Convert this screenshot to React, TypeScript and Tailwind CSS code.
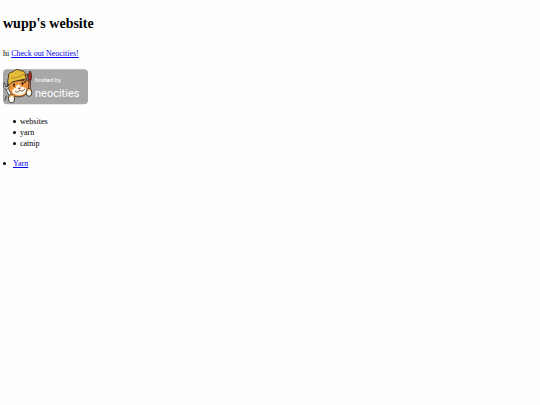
const topics = ["websites", "yarn", "catnip"];

const linkStyle = "text-[#0000ee] underline";

function Bullet() {
  return <span aria-hidden="true" className="size-[3px] rounded-full bg-black" />;
}

function NeocitiesBadge() {
  return (
    <svg
      className="block h-9 w-[85px]"
      viewBox="0 0 85 36"
      role="img"
      aria-label="Hosted by Neocities"
    >
      <rect y="0.3" width="85" height="35" rx="4" fill="#a8a8a8" />

      {/* cat head */}
      <g stroke="#2b2118" strokeWidth="0.8" strokeLinejoin="round">
        <path d="M6 12C3 17 4 22 8 25C12 29 20 29 24 24C27 20 27 15 25 11Z" fill="#ec9440" />
        <path d="M22 14L25 5L19 8Z" fill="#f39a3c" />
        <path
          d="M5 14C4 11 6 9 5.5 7C5 4 8 3 10 3C12 0 16 0 18 2C21 1 23 4 22 7C24 8 24 10 22 10L9 13C7 16 4 17 5 14Z"
          fill="#e5bd38"
        />
        <path d="M8 9C12 9 17 8 21 5" fill="none" stroke="#a77b16" strokeWidth="0.8" />
      </g>
      <path d="M13 17L16 15L18 18C23 18 25 20 22 24C19 27 12 27 9 23C9 20 11 19 13 19Z" fill="#fff4e3" />
      <ellipse cx="11" cy="16" rx="0.9" ry="1.7" fill="#241c17" />
      <ellipse cx="19.5" cy="14.5" rx="0.9" ry="1.7" fill="#241c17" />
      <path d="M14.5 19L18 18.5L16.5 20.5Z" fill="#9b4238" />
      <path d="M12 22C14 24 16 23 17 21C18.5 23 21 22 22 19.5" fill="none" stroke="#33251d" strokeWidth="0.7" />

      {/* wrench and left paw */}
      <g strokeLinecap="round">
        <path d="M3.5 19L9 29" stroke="#292929" strokeWidth="3.2" />
        <path d="M3.5 19L9 29" stroke="#e2e7e8" strokeWidth="2" />
        <path
          d="M1 14L0.7 18C2 21 5 21 6 18L5 15L4.2 18L2.5 18L1.7 14Z"
          fill="#e1e6e7"
          stroke="#292929"
          strokeWidth="0.7"
        />
        <path d="M3.5 27L2 31" stroke="#555" strokeWidth="1.2" />
        <ellipse cx="8.5" cy="29.5" rx="3" ry="4.2" fill="#fffaf0" stroke="#2b2118" strokeWidth="0.9" />
        <path d="M6.5 28C7.5 25.5 10 25.5 11 28" fill="none" stroke="#e69a42" strokeWidth="1.2" />
      </g>

      {/* paintbrush and right paw */}
      <path d="M26 25L27 10" stroke="#302119" strokeWidth="2.3" />
      <path d="M26 25L27 10" stroke="#c87851" strokeWidth="1" />
      <path d="M25.5 11C24.5 8 25.5 5 27 2C28.8 4 29 8 28 11Z" fill="#a92b29" stroke="#462018" strokeWidth="0.8" />
      <ellipse cx="26" cy="23.5" rx="2.8" ry="3.9" fill="#fffaf0" stroke="#2b2118" strokeWidth="0.9" />
      <path d="M24 22C25 20 27 20 28 22" fill="none" stroke="#e69a42" strokeWidth="1.1" />

      <g fill="#fff" fontFamily="Roboto, sans-serif">
        <text x="32" y="13" fontSize="6">hosted by</text>
        <text x="32" y="28" fontSize="11">neocities</text>
      </g>
    </svg>
  );
}

export default function App() {
  return (
    <main className="min-h-screen bg-[#fefefe] px-[3px] pt-3 font-['Liberation_Serif',serif] text-[8px] leading-[11px] text-black">
      <h1 className="text-sm leading-6 font-bold">wupp's website</h1>
      <p className="mt-3">
        hi <a href="https://neocities.org" className={linkStyle}>Check out Neocities!</a>
      </p>
      <a href="https://neocities.org" className="mt-[10px] block w-fit">
        <NeocitiesBadge />
      </a>
      <ul className="mt-[11px] pl-[10px]">
        {topics.map((topic) => (
          <li key={topic} className="flex items-center gap-1">
            <Bullet />
            {topic}
          </li>
        ))}
      </ul>
      <ul className="mt-[9px]">
        <li className="flex items-center gap-[7px]">
          <Bullet />
          <a href="#yarn" className={linkStyle}>Yarn</a>
        </li>
      </ul>
    </main>
  );
}
